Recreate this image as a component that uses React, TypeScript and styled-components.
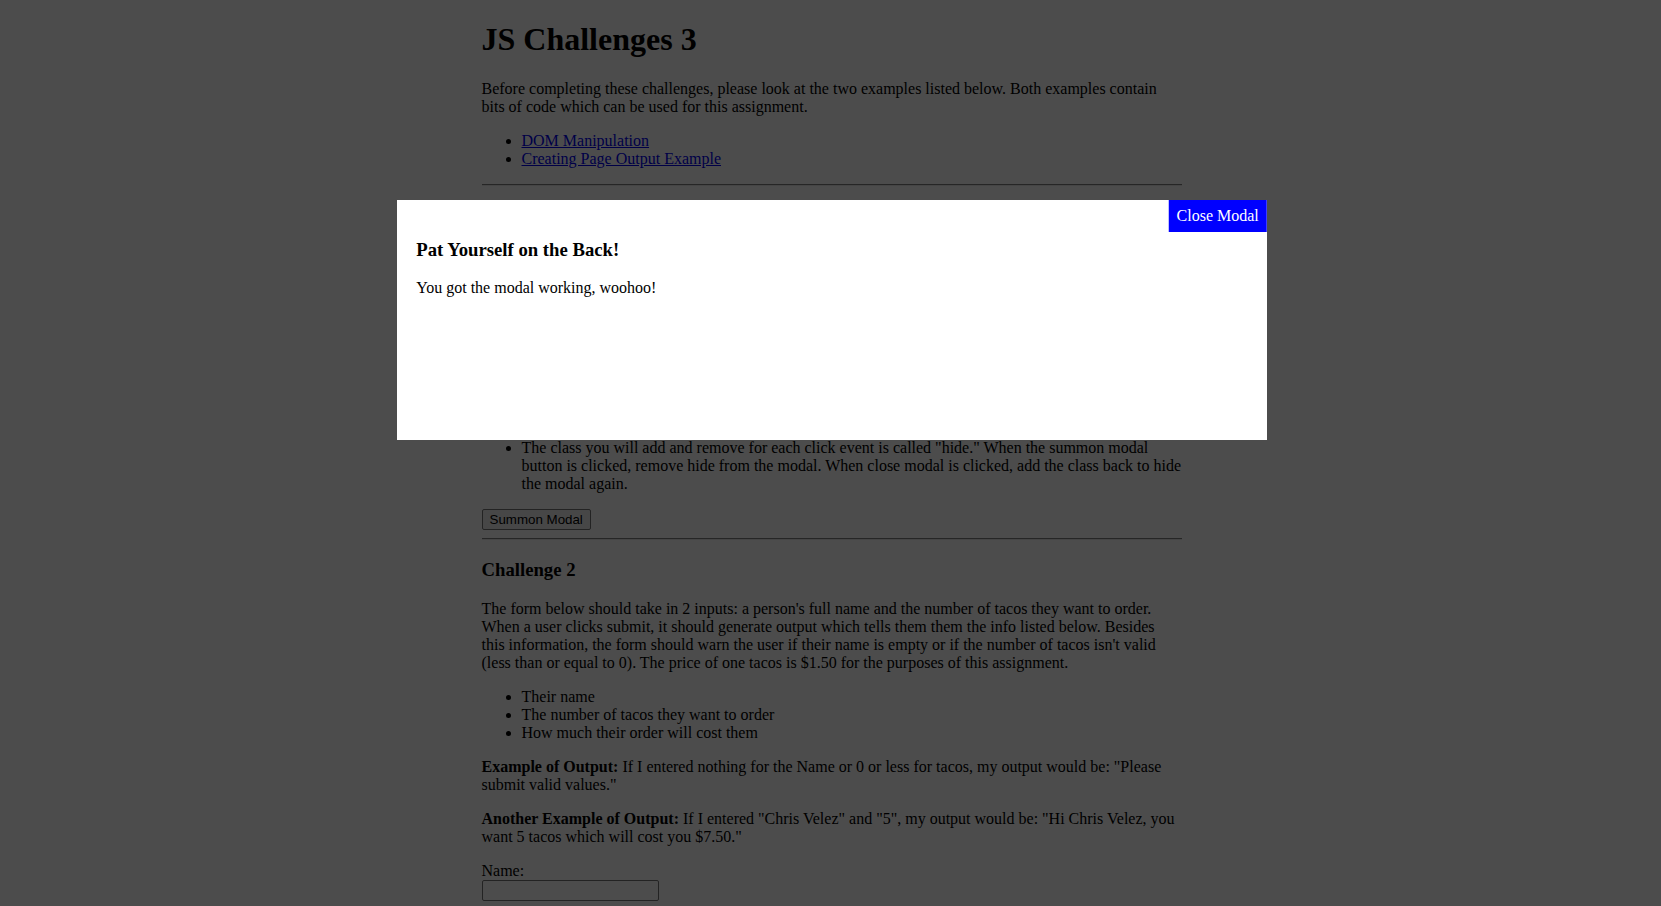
import React from "react";
import styled, { createGlobalStyle } from "styled-components";

const GlobalStyle = createGlobalStyle`
  html, body {
    margin: 0;
    padding: 0;
    background: #ffffff;
  }
  body {
    font-family: "Liberation Serif", "Times New Roman", serif;
    font-size: 16px;
    color: #000000;
  }
`;

const Page = styled.main`
  box-sizing: content-box;
  max-width: 700px;
  margin: 0 auto;
  padding-left: 2px;
`;

const Title = styled.h1`
  font-size: 2em;
  font-weight: bold;
  margin: 0.67em 0;
`;

const Paragraph = styled.p`
  margin: 1em 0;
`;

const List = styled.ul`
  margin: 1em 0;
  padding-left: 40px;
  list-style: disc;
`;

const Link = styled.a`
  color: #0000ee;
  text-decoration: underline;
`;

const Divider = styled.hr`
  margin: 8px 0;
  border: 0;
  border-top: 1px solid #808080;
  border-bottom: 1px solid #e6e6e6;
  height: 0;
`;

const SectionTitle = styled.h3`
  font-size: 1.17em;
  font-weight: bold;
  margin: 1em 0;
`;

const SummonButton = styled.button`
  font-family: "Liberation Sans", Arial, sans-serif;
  font-size: 13.333px;
  padding: 1px 7px;
  background: #efefef;
  color: #000000;
  border: 1px solid #767676;
  border-radius: 2px;
  height: 21px;
`;

const ButtonRow = styled.div`
  line-height: 20px;
`;

const Form = styled.form`
  margin: 0;
`;

const Label = styled.label`
  display: block;
`;

const TextInput = styled.input`
  font-family: "Liberation Sans", Arial, sans-serif;
  font-size: 13.333px;
  width: 171px;
  height: 17px;
  padding: 1px 2px;
  border: 1px solid #767676;
  border-radius: 2px;
  background: #ffffff;
  margin: 0 0 8px 0;
`;

const Overlay = styled.div`
  position: fixed;
  inset: 0;
  background: rgba(0, 0, 0, 0.7);
  z-index: 10;
`;

const Modal = styled.div`
  position: fixed;
  top: 200px;
  left: calc(50% + 1px);
  transform: translateX(-50%);
  width: 50%;
  height: 200px;
  padding: 20px;
  background: #ffffff;
  z-index: 20;
`;

const CloseButton = styled.button`
  position: absolute;
  top: 0;
  right: 0;
  background: #0000ff;
  color: #ffffff;
  border: none;
  font-family: "Liberation Serif", "Times New Roman", serif;
  font-size: 16px;
  line-height: 18px;
  padding: 7px 8px;
  cursor: pointer;
`;

const ModalTitle = styled.h3`
  font-size: 1.17em;
  font-weight: bold;
  margin: 1em 0;
`;

const ModalText = styled.p`
  margin: 1em 0;
`;

export default function App() {
  return (
    <>
      <GlobalStyle />
      <Page>
        <Title>JS Challenges 3</Title>
        <Paragraph>
          Before completing these challenges, please look at the two examples listed below. Both
          examples contain bits of code which can be used for this assignment.
        </Paragraph>
        <List>
          <li>
            <Link href="#dom">DOM Manipulation</Link>
          </li>
          <li>
            <Link href="#output">Creating Page Output Example</Link>
          </li>
        </List>
        <Divider />

        <SectionTitle>Challenge 1</SectionTitle>
        <Paragraph>
          Create a modal that appears when the user clicks the summon modal button and disappears
          when the user clicks the close modal button inside of it.
        </Paragraph>
        <Paragraph>
          The modal markup is already written for you in the HTML file and its styles are already
          in the CSS file, so you only need to write JavaScript for this challenge. Think about which
          elements you need to select, which events you need to listen for, and what should happen
          every time one of those events fires.
        </Paragraph>
        <List>
          <li>The modal is already built for you in the HTML and styled in the CSS.</li>
          <li>Add a click event listener to the summon modal button.</li>
          <li>Add a click event listener to the close modal button.</li>
          <li>Use querySelector to grab both buttons and the modal itself.</li>
          <li>
            The class you will add and remove for each click event is called "hide." When the
            summon modal button is clicked, remove hide from the modal. When close modal is clicked,
            add the class back to hide the modal again.
          </li>
        </List>
        <ButtonRow>
          <SummonButton type="button">Summon Modal</SummonButton>
        </ButtonRow>
        <Divider />

        <SectionTitle>Challenge 2</SectionTitle>
        <Paragraph>
          The form below should take in 2 inputs: a person's full name and the number of tacos they
          want to order. When a user clicks submit, it should generate output which tells them them
          the info listed below. Besides this information, the form should warn the user if their
          name is empty or if the number of tacos isn't valid (less than or equal to 0). The price of
          one tacos is $1.50 for the purposes of this assignment.
        </Paragraph>
        <List>
          <li>Their name</li>
          <li>The number of tacos they want to order</li>
          <li>How much their order will cost them</li>
        </List>
        <Paragraph>
          <strong>Example of Output:</strong> If I entered nothing for the Name or 0 or less for
          tacos, my output would be: "Please submit valid values."
        </Paragraph>
        <Paragraph>
          <strong>Another Example of Output:</strong> If I entered "Chris Velez" and "5", my output
          would be: "Hi Chris Velez, you want 5 tacos which will cost you $7.50."
        </Paragraph>
        <Form onSubmit={(e) => e.preventDefault()}>
          <Label htmlFor="name">Name:</Label>
          <TextInput id="name" type="text" />
          <Label htmlFor="tacos">Number of Tacos:</Label>
          <TextInput id="tacos" type="number" />
        </Form>
      </Page>

      <Overlay />
      <Modal>
        <CloseButton type="button">Close Modal</CloseButton>
        <ModalTitle>Pat Yourself on the Back!</ModalTitle>
        <ModalText>You got the modal working, woohoo!</ModalText>
      </Modal>
    </>
  );
}
